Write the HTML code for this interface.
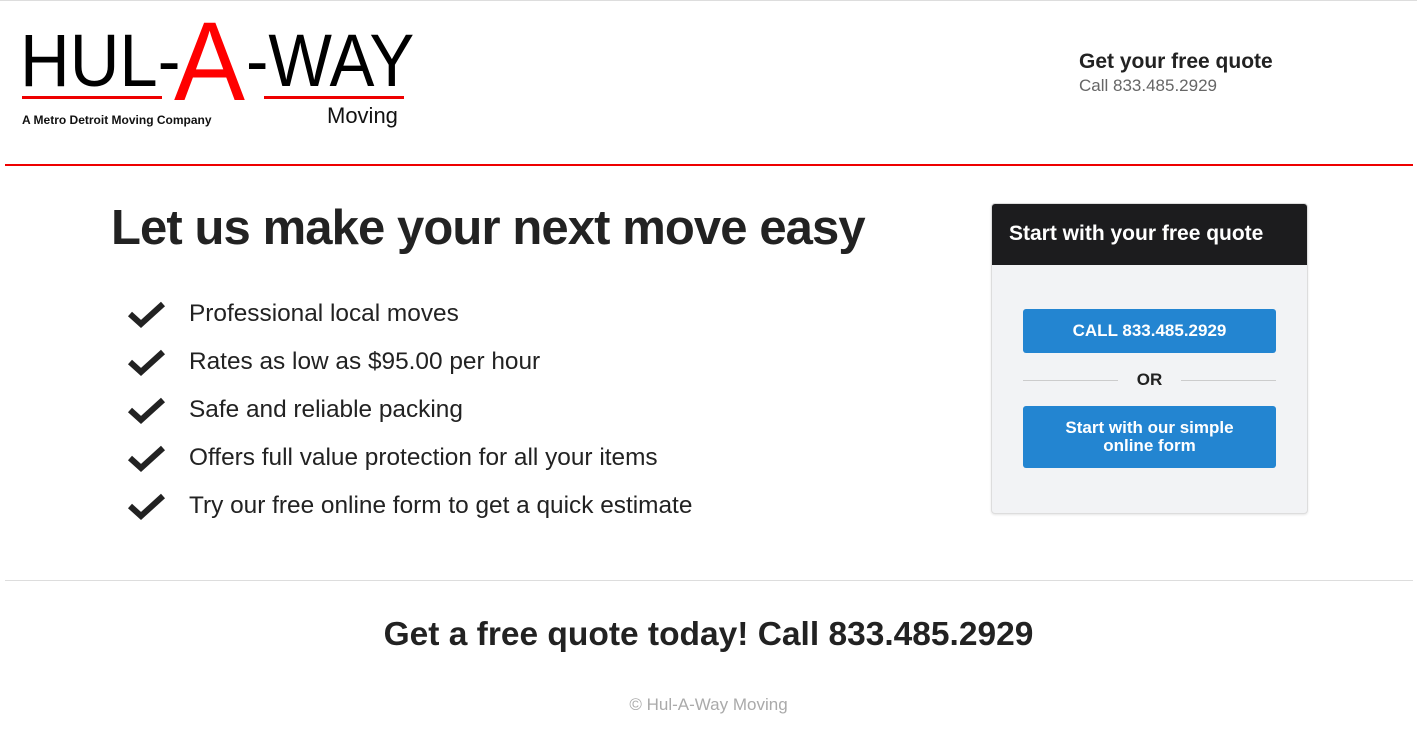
<!DOCTYPE html>
<html><head><style>
body{margin:0;width:1417px;height:756px;background:#fff;font-family:"Liberation Sans",sans-serif;color:#222;position:relative;overflow:hidden}
.a{position:absolute;white-space:nowrap}
</style></head><body>
<div class="a" style="left:0;top:0;width:1417px;height:1px;background:#ddd"></div>
<!-- logo -->
<div class="a" style="left:20px;top:24px;font-size:74px;line-height:74px;color:#000;transform:scaleX(0.93);transform-origin:left">HUL-</div>
<div class="a" style="left:174px;top:6px;font-size:112px;line-height:112px;color:#f00;transform:scaleX(0.95);transform-origin:left">A</div>
<div class="a" style="left:246px;top:24px;font-size:74px;line-height:74px;color:#000;transform:scaleX(0.91);transform-origin:left">-WAY</div>
<div class="a" style="left:22px;top:96px;width:140px;height:3px;background:#e00"></div>
<div class="a" style="left:264px;top:96px;width:140px;height:3px;background:#e00"></div>
<div class="a" style="left:22px;top:113px;font-size:12px;font-weight:bold;color:#111">A Metro Detroit Moving Company</div>
<div class="a" style="left:327px;top:103px;font-size:22px;color:#111">Moving</div>
<div class="a" style="left:1079px;top:50px;font-size:21px;font-weight:bold;color:#222">Get your free quote</div>
<div class="a" style="left:1079px;top:76px;font-size:17px;color:#666">Call 833.485.2929</div>
<div class="a" style="left:5px;top:164px;width:1408px;height:2px;background:#e00"></div>
<div class="a" style="left:111px;top:200px;font-size:49px;font-weight:bold;color:#222;letter-spacing:-0.9px">Let us make your next move easy</div>
<div class="a" style="left:126px;top:290px;font-size:24.4px;line-height:48px;color:#222">
<div><svg width="40" height="30" viewBox="0 0 40 30" style="vertical-align:-8px;margin-right:23px"><path d="M4 15 L15 25 L37 5" fill="none" stroke="#222" stroke-width="6"/></svg>Professional local moves</div>
<div><svg width="40" height="30" viewBox="0 0 40 30" style="vertical-align:-8px;margin-right:23px"><path d="M4 15 L15 25 L37 5" fill="none" stroke="#222" stroke-width="6"/></svg>Rates as low as $95.00 per hour</div>
<div><svg width="40" height="30" viewBox="0 0 40 30" style="vertical-align:-8px;margin-right:23px"><path d="M4 15 L15 25 L37 5" fill="none" stroke="#222" stroke-width="6"/></svg>Safe and reliable packing</div>
<div><svg width="40" height="30" viewBox="0 0 40 30" style="vertical-align:-8px;margin-right:23px"><path d="M4 15 L15 25 L37 5" fill="none" stroke="#222" stroke-width="6"/></svg>Offers full value protection for all your items</div>
<div><svg width="40" height="30" viewBox="0 0 40 30" style="vertical-align:-8px;margin-right:23px"><path d="M4 15 L15 25 L37 5" fill="none" stroke="#222" stroke-width="6"/></svg>Try our free online form to get a quick estimate</div>
</div>
<!-- card -->
<div class="a" style="left:991px;top:203px;width:315px;height:309px;background:#f2f3f5;border:1px solid #ddd;border-radius:4px;overflow:hidden;box-shadow:0 1px 2px rgba(0,0,0,.1)">
<div style="height:61px;background:#1c1c1e;color:#fff;font-size:21px;font-weight:bold;line-height:60px;padding-left:17px">Start with your free quote</div>
<div class="a" style="left:31px;top:105px;width:253px;height:44px;background:#2385d1;border-radius:3px;color:#fff;font-size:17px;font-weight:bold;text-align:center;line-height:44px">CALL 833.485.2929</div>
<div class="a" style="left:31px;top:176px;width:95px;height:1px;background:#ccc"></div>
<div class="a" style="left:189px;top:176px;width:95px;height:1px;background:#ccc"></div>
<div class="a" style="left:126px;top:166px;width:63px;text-align:center;font-size:17px;font-weight:bold;color:#222">OR</div>
<div class="a" style="left:31px;top:202px;width:253px;height:62px;background:#2385d1;border-radius:3px;color:#fff;font-size:17px;font-weight:bold;text-align:center;line-height:18px;padding-top:13px;box-sizing:border-box;white-space:normal">Start with our simple<br>online form</div>
</div>
<div class="a" style="left:5px;top:580px;width:1408px;height:1px;background:#ddd"></div>
<div class="a" style="left:0;width:1417px;top:616px;text-align:center;font-size:33.5px;font-weight:bold;color:#222">Get a free quote today! Call 833.485.2929</div>
<div class="a" style="left:0;width:1417px;top:695px;text-align:center;font-size:17px;color:#aaa">© Hul-A-Way Moving</div>
</body></html>
